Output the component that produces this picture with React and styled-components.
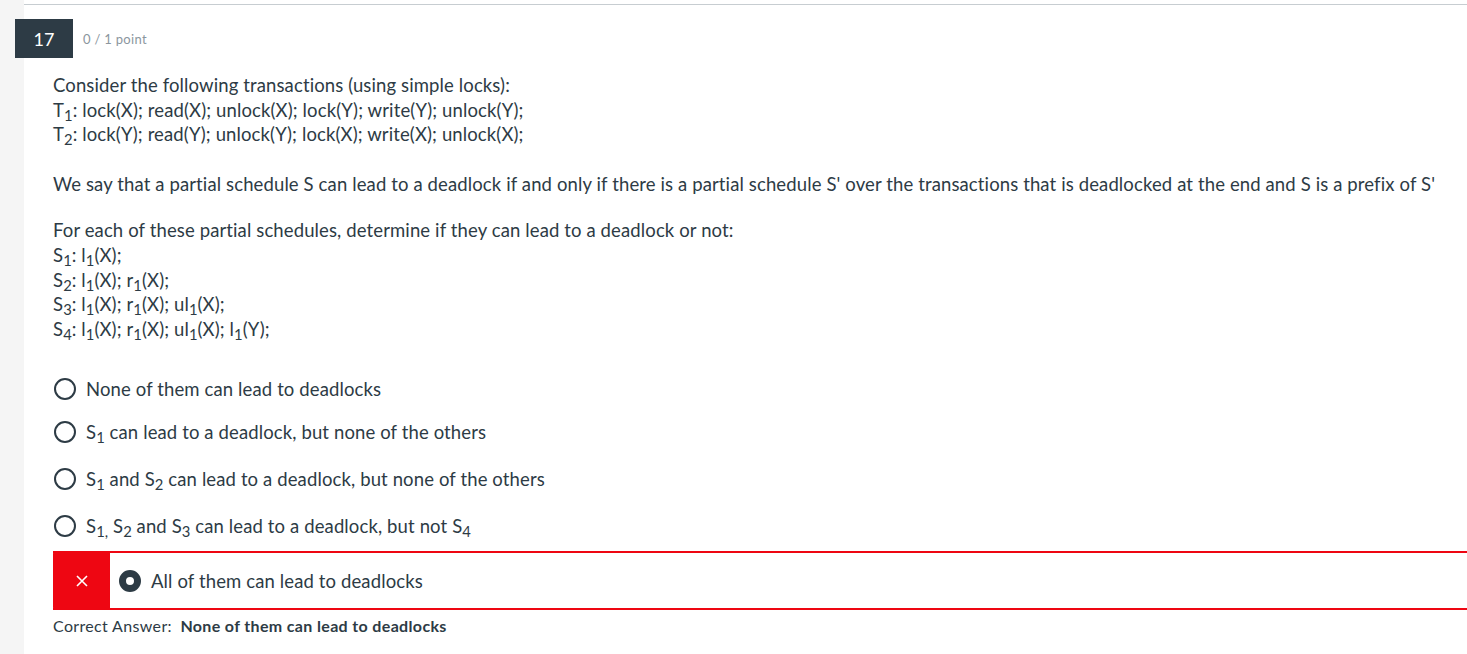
import styled, { createGlobalStyle } from "styled-components"

const GlobalStyle = createGlobalStyle`
    body {
        margin: 0;
        font-family: Lato, "Noto Sans", sans-serif;
        color: #2d3b45;
        background: #fff;
    }
`

const Page = styled.div`
    display: flex;
    min-height: 654px;
`

const SideStrip = styled.div`
    width: 24px;
    flex-shrink: 0;
    background: #f5f5f5;
`

const Card = styled.div`
    flex: 1;
    margin-top: 4px;
    border-top: 1px solid #c7cdd1;
    padding: 14px 0 0 0;
`

const Header = styled.div`
    display: flex;
    align-items: center;
    margin-left: -9px;
`

const NumberBox = styled.div`
    width: 58px;
    height: 39px;
    background: #2d3b45;
    color: #fff;
    font-size: 18px;
    display: flex;
    align-items: center;
    justify-content: center;
`

const Points = styled.span`
    margin-left: 10px;
    font-size: 13px;
    letter-spacing: 0.3px;
    color: #8b969e;
`

const Body = styled.div`
    padding: 15px 0 0 29px;
    font-size: 18.5px;
    letter-spacing: 0.12px;
    line-height: 24.6px;
`

const Para = styled.p`
    margin: 0 0 ${(p) => p.$gap || 24.6}px 0;
`

const Sub = styled.sub`
    font-size: 0.8em;
    line-height: 0;
    vertical-align: -0.3em;
    letter-spacing: 0;
`

const Answers = styled.div`
    display: flex;
    flex-direction: column;
    margin-top: 28px;
`

const AnswerRow = styled.div`
    display: flex;
    align-items: center;
    height: ${(p) => p.$h || 47}px;
    ${(p) => p.$wrong && `
        border-top: 2px solid #ee0612;
        border-bottom: 2px solid #ee0612;
        height: 55px;
        margin-top: 2px;
    `}
`

const WrongMark = styled.div`
    width: 57px;
    align-self: stretch;
    margin: -2px 8px -2px 0;
    background: #ee0612;
    color: #fff;
    display: flex;
    align-items: center;
    justify-content: center;
    border-radius: 3px 0 0 3px;
`

const Radio = styled.span`
    width: 18px;
    height: 18px;
    border: 2px solid #2d3b45;
    border-radius: 50%;
    margin: 0 10px 0 1px;
    box-sizing: content-box;
    flex-shrink: 0;
    ${(p) => p.$checked && `
        width: 8px;
        height: 8px;
        border: 7px solid #2d3b45;
        background: #fff;
    `}
`

const CorrectLine = styled.div`
    font-size: 16px;
    letter-spacing: 0.35px;
    margin-top: 4px;
    b {
        font-weight: 700;
        margin-left: 4px;
    }
`

const S = ({ n }) => (
    <>S<Sub>{n}</Sub></>
)

const App = () => {
    return (
        <Page>
            <GlobalStyle />
            <SideStrip />
            <Card>
                <Header>
                    <NumberBox>17</NumberBox>
                    <Points>0 / 1 point</Points>
                </Header>
                <Body>
                    <Para $gap={25.6}>
                        Consider the following transactions (using simple locks):<br />
                        T<Sub>1</Sub>: lock(X); read(X); unlock(X); lock(Y); write(Y); unlock(Y);<br />
                        T<Sub>2</Sub>: lock(Y); read(Y); unlock(Y); lock(X); write(X); unlock(X);
                    </Para>
                    <Para $gap={21.5}>
                        We say that a partial schedule S can lead to a deadlock if and only if there is a partial schedule S' over the transactions that is deadlocked at the end and S is a prefix of S'
                    </Para>
                    <Para>
                        For each of these partial schedules, determine if they can lead to a deadlock or not:<br />
                        <S n="1" />: l<Sub>1</Sub>(X);<br />
                        <S n="2" />: l<Sub>1</Sub>(X); r<Sub>1</Sub>(X);<br />
                        <S n="3" />: l<Sub>1</Sub>(X); r<Sub>1</Sub>(X); ul<Sub>1</Sub>(X);<br />
                        <S n="4" />: l<Sub>1</Sub>(X); r<Sub>1</Sub>(X); ul<Sub>1</Sub>(X); l<Sub>1</Sub>(Y);
                    </Para>
                    <Answers>
                        <AnswerRow $h={39}>
                            <Radio />
                            None of them can lead to deadlocks
                        </AnswerRow>
                        <AnswerRow>
                            <Radio />
                            <span><S n="1" /> can lead to a deadlock, but none of the others</span>
                        </AnswerRow>
                        <AnswerRow>
                            <Radio />
                            <span><S n="1" /> and <S n="2" /> can lead to a deadlock, but none of the others</span>
                        </AnswerRow>
                        <AnswerRow>
                            <Radio />
                            <span>S<Sub>1,</Sub> <S n="2" /> and <S n="3" /> can lead to a deadlock, but not <S n="4" /></span>
                        </AnswerRow>
                        <AnswerRow $wrong>
                            <WrongMark>
                                <svg width="14" height="14" viewBox="0 0 14 14">
                                    <path d="M2 2 L12 12 M12 2 L2 12" stroke="#fff" strokeWidth="1.6" />
                                </svg>
                            </WrongMark>
                            <Radio $checked />
                            All of them can lead to deadlocks
                        </AnswerRow>
                    </Answers>
                    <CorrectLine>
                        Correct Answer: <b>None of them can lead to deadlocks</b>
                    </CorrectLine>
                </Body>
            </Card>
        </Page>
    )
}

export default App
